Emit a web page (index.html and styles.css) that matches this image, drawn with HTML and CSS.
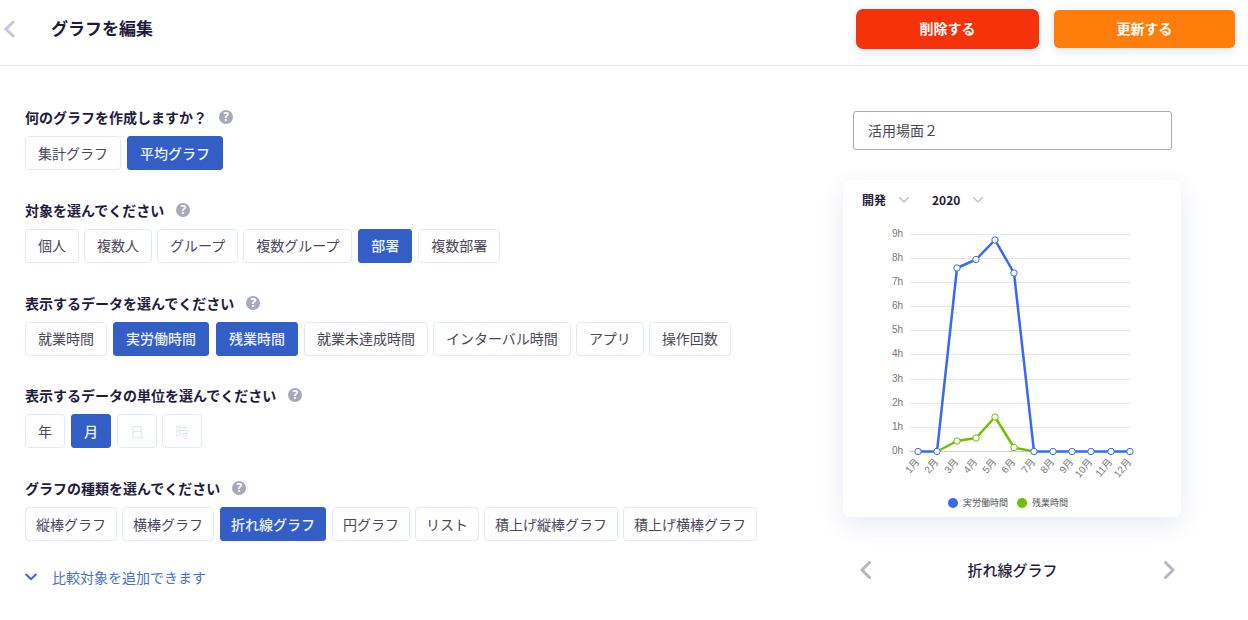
FILE: index.html
```html
<!DOCTYPE html>
<html lang="ja">
<head>
<meta charset="utf-8">
<meta name="viewport" content="width=device-width, initial-scale=1">
<title>グラフを編集</title>
<link rel="stylesheet" href="styles.css">
</head>
<body>
<header class="topbar">
  <button class="icon-button" type="button" aria-label="戻る">
    <svg class="chevron chevron-back" width="11" height="18" viewBox="0 0 11 18"><path d="M10 1.2 2 9l8 7.8"/></svg>
  </button>
  <h1 class="title">グラフを編集</h1>
  <div class="actions">
    <button class="action action-delete" type="button">削除する</button>
    <button class="action action-update" type="button">更新する</button>
  </div>
</header>

<main class="editor">
  <form class="options">
    <section class="group">
      <h2 class="question">何のグラフを作成しますか？ <button class="help" type="button">?</button></h2>
      <div class="choices">
        <button class="choice" type="button">集計グラフ</button>
        <button class="choice selected" type="button" aria-pressed="true">平均グラフ</button>
      </div>
    </section>
    <section class="group">
      <h2 class="question">対象を選んでください <button class="help" type="button">?</button></h2>
      <div class="choices">
        <button class="choice" type="button">個人</button>
        <button class="choice" type="button">複数人</button>
        <button class="choice" type="button">グループ</button>
        <button class="choice" type="button">複数グループ</button>
        <button class="choice selected" type="button" aria-pressed="true">部署</button>
        <button class="choice" type="button">複数部署</button>
      </div>
    </section>
    <section class="group">
      <h2 class="question">表示するデータを選んでください <button class="help" type="button">?</button></h2>
      <div class="choices">
        <button class="choice" type="button">就業時間</button>
        <button class="choice selected" type="button" aria-pressed="true">実労働時間</button>
        <button class="choice selected" type="button" aria-pressed="true">残業時間</button>
        <button class="choice" type="button">就業未達成時間</button>
        <button class="choice" type="button">インターバル時間</button>
        <button class="choice" type="button">アプリ</button>
        <button class="choice" type="button">操作回数</button>
      </div>
    </section>
    <section class="group">
      <h2 class="question">表示するデータの単位を選んでください <button class="help" type="button">?</button></h2>
      <div class="choices">
        <button class="choice" type="button">年</button>
        <button class="choice selected" type="button" aria-pressed="true">月</button>
        <button class="choice" type="button" disabled>日</button>
        <button class="choice" type="button" disabled>時</button>
      </div>
    </section>
    <section class="group">
      <h2 class="question">グラフの種類を選んでください <button class="help" type="button">?</button></h2>
      <div class="choices choices-compact">
        <button class="choice" type="button">縦棒グラフ</button>
        <button class="choice" type="button">横棒グラフ</button>
        <button class="choice selected" type="button" aria-pressed="true">折れ線グラフ</button>
        <button class="choice" type="button">円グラフ</button>
        <button class="choice" type="button">リスト</button>
        <button class="choice" type="button">積上げ縦棒グラフ</button>
        <button class="choice" type="button">積上げ横棒グラフ</button>
      </div>
      <button class="expand" type="button">
        <svg class="chevron chevron-expand" width="12" height="8" viewBox="0 0 12 8"><path d="M1.200 1.500 6 6.300l4.800-4.800"/></svg>
        比較対象を追加できます
      </button>
    </section>
  </form>

  <aside class="preview">
    <input class="name" type="text" value="活用場面２" aria-label="グラフ名">
    <div class="card">
      <div class="filters">
        <label class="filter">
          <select aria-label="部署"><option>開発</option></select>
          <svg class="chevron chevron-filter" width="10" height="6" viewBox="0 0 10 6"><path d="M.7.7 5 5 9.300.7"/></svg>
        </label>
        <label class="filter">
          <select aria-label="年"><option>2020</option></select>
          <svg class="chevron chevron-filter" width="10" height="6" viewBox="0 0 10 6"><path d="M.7.7 5 5 9.300.7"/></svg>
        </label>
      </div>
      <svg class="chart" viewBox="0 0 338 276" role="img" aria-label="月別の時間">
        <path class="grid" d="M67 19.500H288M67 43.500H288M67 67.500H288M67 91.500H288M67 115.500H288M67 139.500H288M67 164.500H288M67 188.500H288M67 212.500H288"/>
        <path class="axis" d="M67 236.500H288"/>
        <g class="hours">
          <text x="60" y="22">9h</text><text x="60" y="46">8h</text><text x="60" y="70">7h</text><text x="60" y="94">6h</text><text x="60" y="118">5h</text>
          <text x="60" y="142">4h</text><text x="60" y="167">3h</text><text x="60" y="191">2h</text><text x="60" y="215">1h</text><text x="60" y="239">0h</text>
        </g>
        <g class="months">
          <text transform="translate(77 247) rotate(-50)">1月</text>
          <text transform="translate(96 247) rotate(-50)">2月</text>
          <text transform="translate(116 247) rotate(-50)">3月</text>
          <text transform="translate(135 247) rotate(-50)">4月</text>
          <text transform="translate(154 247) rotate(-50)">5月</text>
          <text transform="translate(173 247) rotate(-50)">6月</text>
          <text transform="translate(193 247) rotate(-50)">7月</text>
          <text transform="translate(212 247) rotate(-50)">8月</text>
          <text transform="translate(231 247) rotate(-50)">9月</text>
          <text transform="translate(250 247) rotate(-50)">10月</text>
          <text transform="translate(270 247) rotate(-50)">11月</text>
          <text transform="translate(289 247) rotate(-50)">12月</text>
        </g>
        <g class="series series-overtime">
          <polyline points="94,236.500 114,226 133,223 152,202 171,232.500 191,236.500"/>
          <circle cx="114" cy="226" r="3.200"/><circle cx="133" cy="223" r="3.200"/><circle cx="152" cy="202" r="3.200"/><circle cx="171" cy="232.500" r="3.200"/>
        </g>
        <g class="series series-actual">
          <polyline points="75,236.500 94,236.500 114,53 133,44.500 152,25 171,58 191,236.500 287,236.500"/>
          <circle cx="75" cy="236.500" r="3.200"/><circle cx="94" cy="236.500" r="3.200"/><circle cx="114" cy="53" r="3.200"/><circle cx="133" cy="44.500" r="3.200"/>
          <circle cx="152" cy="25" r="3.200"/><circle cx="171" cy="58" r="3.200"/><circle cx="191" cy="236.500" r="3.200"/><circle cx="210" cy="236.500" r="3.200"/>
          <circle cx="229" cy="236.500" r="3.200"/><circle cx="248" cy="236.500" r="3.200"/><circle cx="268" cy="236.500" r="3.200"/><circle cx="287" cy="236.500" r="3.200"/>
        </g>
      </svg>
      <ul class="legend">
        <li class="legend-item legend-actual">実労働時間</li>
        <li class="legend-item legend-overtime">残業時間</li>
      </ul>
    </div>
    <nav class="pager">
      <button class="icon-button" type="button" aria-label="前へ">
        <svg class="chevron" width="11" height="18" viewBox="0 0 11 18"><path d="M9.500 1.500 2 9l7.500 7.500"/></svg>
      </button>
      <span class="pager-label">折れ線グラフ</span>
      <button class="icon-button" type="button" aria-label="次へ">
        <svg class="chevron" width="11" height="18" viewBox="0 0 11 18"><path d="M1.500 1.500 9 9l-7.500 7.500"/></svg>
      </button>
    </nav>
  </aside>
</main>
</body>
</html>
```

FILE: styles.css
```css
* {
  box-sizing: border-box;
}

body {
  margin: 0;
  background: #fff;
  color: #1f1b3a;
  font-family: "Noto Sans CJK JP", "Noto Sans", sans-serif;
  font-size: 14px;
  line-height: 20px;
}

button,
input,
select {
  font: inherit;
  color: inherit;
}

button {
  padding: 0;
  border: 0;
  background: none;
  cursor: pointer;
  white-space: nowrap;
}

.chevron {
  display: block;
  fill: none;
  stroke: #b4b7c5;
  stroke-width: 3;
  stroke-linecap: round;
  stroke-linejoin: round;
}

.chevron-back {
  stroke: #c5c8d3;
  stroke-linecap: butt;
  stroke-linejoin: miter;
}

.chevron-expand {
  stroke: #3568ee;
  stroke-width: 2;
}

.topbar {
  display: flex;
  align-items: center;
  padding: 9px 13px 16px 4px;
  border-bottom: 1px solid #e4eaf2;
}

.title {
  margin: 0 0 0 36px;
  padding-bottom: 2px;
  font-size: 17px;
  line-height: 24px;
  font-weight: 700;
}

.actions {
  display: flex;
  align-items: center;
  gap: 15px;
  margin-left: auto;
}

.action {
  padding-bottom: 2px;
  border-radius: 7px;
  color: #fff;
  font-weight: 700;
  box-shadow: 0 3px 8px rgba(60, 80, 160, 0.14);
}

.action-delete {
  width: 183px;
  height: 40px;
  background: #f5330a;
}

.action-update {
  width: 181px;
  height: 38px;
  border-radius: 5px;
  background: #ff7d0a;
}

.editor {
  display: grid;
  grid-template-columns: 1fr 338px;
  gap: 40px;
  padding: 41px 67px 32px 25px;
}

.options {
  display: flex;
  flex-direction: column;
  justify-content: space-between;
  gap: 20px;
}

.question {
  display: flex;
  align-items: center;
  gap: 12px;
  margin: 0 0 9px;
  font-size: 14px;
  line-height: 20px;
  font-weight: 700;
}

.help {
  width: 14px;
  height: 14px;
  border-radius: 50%;
  background: #a6a9b9;
  color: #fff;
  font-family: "Open Sans", sans-serif;
  font-size: 12px;
  line-height: 14px;
  font-weight: 700;
}

.choices {
  display: flex;
  flex-wrap: wrap;
  gap: 5px;
}

.choice {
  height: 34px;
  padding: 0 12px 1px;
  border: 1px solid #e2e9fb;
  border-radius: 4px;
  background: #fff;
  color: #4a4759;
}

.choices-compact .choice {
  padding: 0 10px 1px;
}

.choice.selected {
  margin: 0 1px;
  border-color: #335ec6;
  border-radius: 3px;
  background: #335ec6;
  color: #e9effc;
  font-weight: 500;
}

.choice:disabled {
  color: #e2e9f8;
  cursor: default;
}

.expand {
  display: flex;
  align-items: center;
  gap: 15px;
  margin-top: 26px;
  color: #4a70cb;
}

.preview {
  padding-top: 4px;
}

.name {
  display: block;
  width: calc(100% - 19px);
  height: 39px;
  margin-left: 10px;
  padding: 0 14px 2px;
  border: 1px solid #a9aab6;
  border-radius: 3px;
  background: #fff;
  color: #4a4759;
}

.card {
  margin-top: 30px;
  padding: 10px 0 2px;
  border-radius: 7px;
  background: #fff;
  box-shadow: 0 8px 24px rgba(70, 90, 170, 0.12);
}

.filters {
  display: flex;
  gap: 23px;
  padding: 0 19px;
}

.filter {
  display: flex;
  align-items: center;
  gap: 12px;
}

.filter select {
  appearance: none;
  height: 20px;
  padding: 0;
  border: 0;
  background: none;
  font-size: 12px;
  line-height: 20px;
  font-weight: 700;
}

.chevron-filter {
  stroke: #bfc2cc;
  stroke-width: 1.5;
}

.chart {
  display: block;
  width: 100%;
  margin-top: 5px;
}

.grid,
.axis {
  fill: none;
  stroke: #e8e8e8;
}

.axis {
  stroke: #cfcfcf;
}

.hours,
.months {
  fill: #777;
  font-family: "Liberation Sans", "Noto Sans CJK JP", sans-serif;
  font-size: 10px;
  text-anchor: end;
}

.series {
  fill: #fff;
  stroke-width: 1;
}

.series polyline {
  fill: none;
  stroke-width: 2.5;
  stroke-linejoin: round;
}

.series-actual {
  stroke: #366bee;
}

.series-overtime {
  stroke: #74bd08;
}

.legend {
  display: flex;
  gap: 9px;
  margin: 0;
  padding: 0 0 0 105px;
  list-style: none;
  color: #555;
  font-size: 9px;
  line-height: 24px;
}

.legend-item {
  display: flex;
  align-items: center;
  gap: 5px;
}

.legend-item::before {
  content: "";
  width: 10px;
  height: 10px;
  border-radius: 50%;
  background: #366bee;
}

.legend-overtime::before {
  background: #74bd08;
}

.pager {
  display: flex;
  align-items: center;
  justify-content: space-between;
  margin-top: 36px;
  padding: 0 6px 0 17px;
}

.pager-label {
  margin-right: 10px;
  font-size: 15px;
  line-height: 34px;
  font-weight: 500;
}
```
